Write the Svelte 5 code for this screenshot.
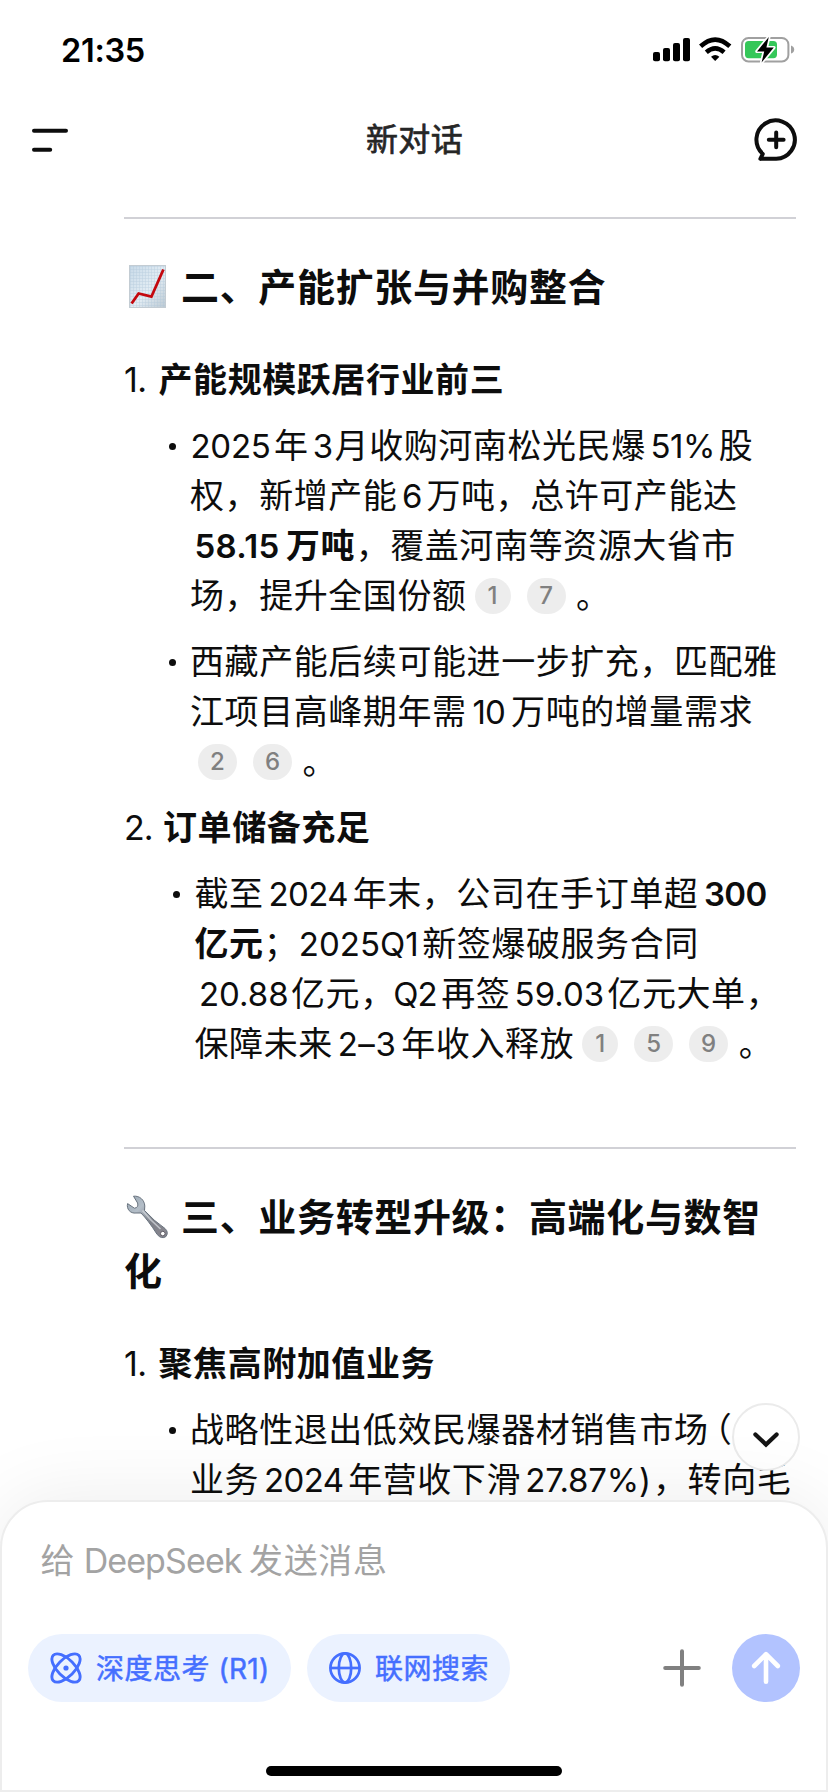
<script>
  // A line is a list of runs: plain text, n = latin/number run with its advance w
  // (x nudges it, ls is its tracking), c = citation, m = left margin of a text run.
  const capacity = [
    [{ n: '2025', w: 84, x: -1.5, ls: -0.3 }, { t: '年' }, { n: '3', w: 26, x: 1 }, { t: '月收购河南松光民爆' }, { n: '51%', w: 72, x: 1, ls: -0.5 }, { t: '股', m: 1 }],
    [{ t: '权，新增产能' }, { n: '6', w: 28.5 }, { t: '万吨，总许可产能达', m: 0.5 }],
    [{ n: '58.15', w: 96, b: true, x: -1, ls: 0.3 }, { t: '万吨', b: true }, { t: '，覆盖河南等资源大省市', m: 0.5 }],
    [{ t: '场，提升全国份额' }, { c: 1 }, { c: 7 }, { t: '。', m: 2.5 }]
  ];
  const tibet = [
    [{ t: '西藏产能后续可能进一步扩充，匹配雅' }],
    [{ t: '江项目高峰期年需' }, { n: '10', w: 44.5 }, { t: '万吨的增量需求' }],
    [{ c: 2 }, { c: 6 }, { t: '。', m: 2.5 }]
  ];
  const orders = [
    [{ t: '截至' }, { n: '2024', w: 89, ls: -0.6 }, { t: '年末，公司在手订单超' }, { n: '300', w: 74, b: true, ls: -0.6 }],
    [{ t: '亿元', b: true }, { t: '；' }, { n: '2025Q1', w: 124, x: -1.5, ls: 0 }, { t: '新签爆破服务合同' }],
    [{ n: '20.88', w: 96.5, x: 1, ls: 0 }, { t: '亿元，' }, { n: 'Q2', w: 46.5, x: -3 }, { t: '再签' }, { n: '59.03', w: 97, x: 0.5, ls: 0 }, { t: '亿元大单，' }],
    [{ t: '保障未来' }, { n: '2–3', w: 68.5, ls: 0.6 }, { t: '年收入释放' }, { c: 1 }, { c: 5 }, { c: 9 }, { t: '。', m: 2.5 }]
  ];
  const focus = [
    [{ t: '战略性退出低效民爆器材销售市场' }, { n: '（', w: 34.5, x: -3, half: true }, { t: '该' }],
    [{ t: '业务' }, { n: '2024', w: 89, ls: -0.6 }, { t: '年营收下滑' }, { n: '27.87%)', w: 132, x: 1, ls: -0.2 }, { t: '，转向毛' }]
  ];
</script>

{#snippet bullet(lines)}
  <li>
    <i class="dot"></i>
    <div class="lines">
      {#each lines as line}
        <p>
          {#each line as run}
            {#if run.c}<span class="cite" class:one={run.c === 1}>{run.c}</span>
            {:else if run.n}<span class="num" class:bold={run.b} class:half={run.half} style:width="{run.w}px" style:text-indent="{(run.x ?? 0) * 2}px" style:letter-spacing="{run.ls ?? -0.9}px">{run.n}</span>
            {:else}<span class:bold={run.b} style:margin-left="{run.m ?? 0}px">{run.t}</span>{/if}
          {/each}
        </p>
      {/each}
    </div>
  </li>
{/snippet}

<div class="screen">
  <div class="status">
    <span class="time">21:35</span>
    <svg width="144" height="32" viewBox="652 34 144 32">
      <g fill="#000">
        <rect x="653" y="52" width="7" height="9.2" rx="2" />
        <rect x="663" y="48" width="7" height="13.2" rx="2" />
        <rect x="673" y="43" width="7" height="18.2" rx="2" />
        <rect x="683" y="38" width="7" height="23.2" rx="2" />
      </g>
      <path d="M715.2 61 L711 56.8 Q715.2 53 719.4 56.8Z" />
      <g fill="none" stroke="#000" stroke-width="4.6">
        <path d="M706.3 52.3 Q715.2 44.6 724.1 52.3" />
        <path d="M700.6 46.3 Q715.2 32.8 729.8 46.3" />
      </g>
      <rect x="742" y="38" width="46.4" height="23.4" rx="6.5" fill="#fff" stroke="#a0a0a0" stroke-width="2" />
      <path d="M791 45.6 Q794.2 46.6 794.2 49.6 T791 53.6Z" fill="#a0a0a0" />
      <rect x="745" y="41" width="32" height="17.2" rx="3.6" fill="#35c759" />
      <path d="M768.8 37 L757 51.4 H764.2 L761.6 62.4 L773.8 47.6 H766.4Z" fill="#000" stroke="#fff" stroke-width="3.4" stroke-linejoin="round" paint-order="stroke" />
    </svg>
  </div>

  <header>
    <svg width="36" height="24" viewBox="32 127 36 24" fill="none" stroke="#0d0d0d" stroke-width="4" stroke-linecap="round">
      <path d="M34 129.8H66M34 148.8H50.2" />
    </svg>
    <h1>新对话</h1>
    <svg width="46" height="46" viewBox="753 117 46 46" fill="none" stroke="#0d0d0d" stroke-width="4" stroke-linecap="round" stroke-linejoin="round">
      <path d="M760.4 158.8H776.2A19.2 19.2 0 1 0 762.8 153.9L760.4 158.8" />
      <path d="M768.8 139.8H783.6M776.2 132.4V147.2" />
    </svg>
  </header>

  <main>
    <hr />
    <h2 class="first">
      <svg class="emoji" width="44" height="48" viewBox="0 0 44 48">
        <defs>
          <linearGradient id="sheet" x1="0" y1="0" x2="1" y2="1">
            <stop offset="0" stop-color="#c8dae8" /><stop offset=".55" stop-color="#e3edf4" /><stop offset="1" stop-color="#bdcad3" />
          </linearGradient>
          <pattern id="grid" width="3" height="3" patternUnits="userSpaceOnUse"><path d="M0 .5H3M.5 0V3" stroke="#abc3d6" stroke-width=".5" opacity=".6" /></pattern>
        </defs>
        <rect x="5.5" y="2.5" width="36" height="42" fill="url(#sheet)" />
        <rect x="5.5" y="2.5" width="36" height="42" fill="url(#grid)" stroke="#c3ccd3" stroke-width="1" />
        <path d="M7.6 40.5 L14.6 30.5 L27.4 33.7 L39.4 6.5" fill="none" stroke="#c4080e" stroke-width="2.8" />
      </svg><span>二、产能扩张与并购整合</span>
    </h2>

    <h3><span class="ord">1.</span><b>产能规模跃居行业前三</b></h3>
    <ul>
      {@render bullet(capacity)}
      {@render bullet(tibet)}
    </ul>

    <h3 class="next"><span class="ord wide">2.</span><b>订单储备充足</b></h3>
    <ul class="wide">
      {@render bullet(orders)}
    </ul>

    <hr class="second" />
    <h2>
      <svg class="emoji" width="44" height="48" viewBox="0 0 44 48">
        <defs>
          <linearGradient id="steel" x1="0" y1="0" x2="1" y2="1">
            <stop offset="0" stop-color="#98a6b2" /><stop offset=".3" stop-color="#b4bec8" /><stop offset=".6" stop-color="#7d8088" /><stop offset="1" stop-color="#8a8790" />
          </linearGradient>
        </defs>
        <path d="M9.5 3.2 L13.6 10 Q14.8 14.6 10.4 15.2 L3.6 10.6 C2.2 16 6.5 20.8 12 20 L17 20 Q24 27 33.2 41.5 Q37.5 46.6 42 43.5 Q45 39.3 41 35.5 Q30 28 20.5 17.5 L20.8 13 C20.4 7 15.8 2.6 9.5 3.2Z" fill="url(#steel)" stroke="#68727e" stroke-width="1" stroke-linejoin="round" />
        <path d="M18.5 17.5 Q26 27 36.5 36" fill="none" stroke="#d4d8de" stroke-width="1.6" opacity=".75" />
        <circle cx="38.8" cy="40.6" r="2.3" fill="#fff" stroke="#5c5a62" stroke-width="1" />
      </svg><span>三、业务转型升级：高端化与数智</span><br /><span>化</span>
    </h2>

    <h3><span class="ord">1.</span><b>聚焦高附加值业务</b></h3>
    <ul>
      {@render bullet(focus)}
    </ul>
  </main>

  <button class="down" aria-label="↓">
    <svg width="30" height="20" viewBox="0 0 30 20" fill="none" stroke="#141414" stroke-width="4.2" stroke-linecap="round" stroke-linejoin="miter"><path d="M4.4 4.4L15 14.6L25.6 4.4" /></svg>
  </button>

  <section class="composer">
    <div class="placeholder"><span>给</span><span class="brand">DeepSeek</span><span>发送消息</span></div>
    <div class="tools">
      <button class="chip think">
        <svg width="32" height="32" viewBox="-16 -16 32 32" fill="none" stroke="#456fff" stroke-width="2.9">
          <ellipse rx="18" ry="8.6" transform="rotate(45)" />
          <ellipse rx="18" ry="8.6" transform="rotate(-45)" />
          <circle r="2.6" fill="#456fff" stroke="none" />
        </svg>
        <span>深度思考 <em>(R1)</em></span>
      </button>
      <button class="chip web">
        <svg width="32" height="32" viewBox="-16 -16 32 32" fill="none" stroke="#456fff" stroke-width="2.7">
          <circle r="14.6" /><ellipse rx="6.2" ry="14.6" /><path d="M-14.6 0H14.6" />
        </svg>
        <span>联网搜索</span>
      </button>
      <svg class="plus" width="38" height="38" viewBox="-19 -19 38 38" stroke="#808080" stroke-width="4" stroke-linecap="round"><path d="M-16.8 0H16.8M0 -16.8V16.8" /></svg>
      <button class="send" aria-label="↑">
        <svg width="34" height="36" viewBox="0 0 34 36" fill="none" stroke="#fff" stroke-width="4.6" stroke-linecap="round" stroke-linejoin="round"><path d="M17 31.8V4.2M5.2 16L17 4.2L28.8 16" /></svg>
      </button>
    </div>
    <div class="home"></div>
  </section>
</div>

<style>
  :global(body) { background: #fff; }
  .screen {
    position: relative; width: 828px; height: 1792px; overflow: hidden; background: #fff; color: #0d0d0d;
    font-family: Inter, "Noto Sans CJK SC", sans-serif; font-size: 34px; box-sizing: border-box;
  }
  .screen :global(*) { box-sizing: border-box; }
  h1, h2, h3, p, ul { margin: 0; padding: 0; font-weight: 400; }
  svg { display: block; flex: none; }
  button { border: 0; padding: 0; font: inherit; }

  .status { display: flex; justify-content: space-between; align-items: center; height: 100px; padding: 0 32px 0 61px; }
  .time { font-size: 32.5px; font-weight: 600; letter-spacing: -.3px; color: #000; }

  header { display: flex; justify-content: space-between; align-items: center; height: 80px; padding: 0 29px 0 32px; }
  h1 { font-size: 32px; letter-spacing: .4px; color: #262626; line-height: 40px; margin-left: 8px; -webkit-text-stroke: .7px #262626; }

  main { padding: 37px 32px 0 124px; }
  hr { margin: 0; height: 2px; border: 0; background: #d1d1d6; }
  hr.second { margin-top: 78px; }
  h2 { margin-top: 41px; font-size: 38px; font-weight: 600; line-height: 54px; letter-spacing: .66px; white-space: nowrap; }
  .emoji { display: inline-block; vertical-align: -10px; margin-right: 13px; }
  h3 { display: flex; margin-top: 41px; font-size: 34px; line-height: 50px; }
  h3.next { margin-top: 16px; }
  .ord { width: 34.5px; letter-spacing: -.5px; }
  .ord.wide { width: 39px; letter-spacing: -.9px; }
  b, .bold { font-weight: 600; }
  b, p { letter-spacing: .57px; }

  ul { list-style: none; padding-left: 44.5px; }
  ul.wide { padding-left: 49px; }
  li { display: flex; gap: 14.5px; margin-top: 16px; }
  .dot { flex: none; width: 7px; height: 7px; margin-top: 21.5px; border-radius: 50%; background: #0d0d0d; }
  p { display: flex; align-items: baseline; height: 50px; line-height: 50px; white-space: nowrap; }
  .num { flex: none; text-align: center; font-size: 33px; }
  .half { font-size: 34px; font-feature-settings: "halt"; }
  .cite {
    align-self: center; width: 39px; height: 36px; margin: 0 8px; border-radius: 18px; background: #ededed;
    color: #808080; font-size: 24px; font-weight: 500; line-height: 36px; text-align: center; letter-spacing: 0;
  }
  .cite.one { width: 36px; }

  .down {
    position: absolute; left: 732px; top: 1403px; width: 68px; height: 68px; border-radius: 50%;
    display: flex; align-items: center; justify-content: center; background: #fff; border: 2px solid #ebebeb;
  }
  .down svg { margin-top: 6px; }

  .composer {
    position: absolute; left: 0; top: 1500px; width: 828px; height: 292px; padding: 34px 26px 0;
    border: 2px solid #ededed; border-radius: 48px 48px 0 0; background: #fff; box-shadow: 0 0 80px rgba(0, 0, 0, .08);
  }
  .placeholder { display: flex; padding-left: 12.5px; line-height: 50px; letter-spacing: .6px; color: #a3a3a3; }
  .brand { width: 159px; margin: 0 7px 0 8px; text-align: center; letter-spacing: -.9px; }
  .tools { display: flex; align-items: center; height: 68px; margin-top: 48px; }
  .chip { display: flex; align-items: center; height: 68px; border-radius: 34px; background: #ebf2ff; color: #456fff; font-size: 28px; letter-spacing: .5px; white-space: nowrap; -webkit-text-stroke: .5px #456fff; }
  .chip span { margin-top: -2px; }
  .think { width: 263px; padding-left: 22px; gap: 14px; }
  .web { width: 203px; margin-left: 16px; padding-left: 22px; gap: 14px; }
  em { font-style: normal; letter-spacing: .3px; }
  .plus { margin-left: 153px; }
  .send { display: flex; align-items: center; justify-content: center; width: 68px; height: 68px; margin-left: 31px; border-radius: 50%; background: #b2c3ff; }
  .home { width: 296px; height: 10px; margin: 64px auto 0; border-radius: 5px; background: #000; }
</style>
